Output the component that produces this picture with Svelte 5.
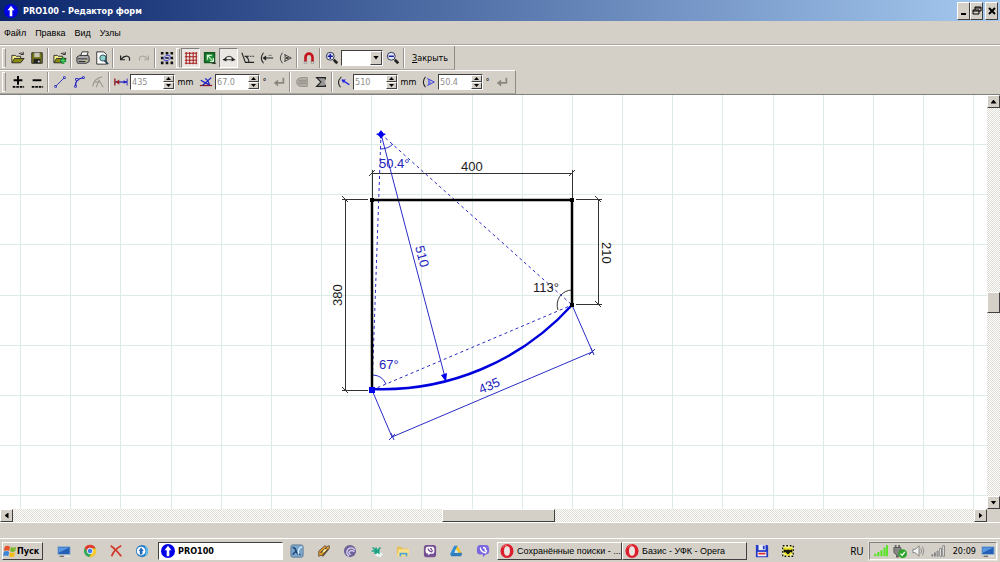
<script lang="ts">
  /**
   * Shape editor window
   *
   * Title bar, menus, two toolbars, the drawing canvas and the desktop taskbar.
   */

  type Tool = { icon?: string; label?: string; pressed?: boolean; sep?: boolean; grip?: boolean };

  const menus = ['Файл', 'Правка', 'Вид', 'Узлы'];

  const fileTools: Tool[] = [
    { icon: 'open', label: 'Открыть' },
    { icon: 'save', label: 'Сохранить' },
    { sep: true },
    { icon: 'import', label: 'Импорт' },
    { sep: true },
    { icon: 'print', label: 'Печать' },
    { icon: 'preview', label: 'Просмотр' },
    { sep: true },
    { icon: 'undo', label: 'Отменить' },
    { icon: 'redo', label: 'Повторить' },
    { sep: true },
    { icon: 'select', label: 'Выделить всё' },
    { grip: true },
    { icon: 'grid', label: 'Сетка', pressed: true },
    { icon: 'snap', label: 'Привязка' },
    { icon: 'dims', label: 'Размеры', pressed: true },
    { icon: 'angles', label: 'Углы' },
    { icon: 'radius', label: 'Радиусы' },
    { icon: 'arcAngle', label: 'Углы дуг' },
    { sep: true },
    { icon: 'magnet', label: 'Магнит' },
    { sep: true },
    { icon: 'zoomIn', label: 'Увеличить' }
  ];

  const nodeTools: Tool[] = [
    { icon: 'plus', label: 'Добавить узел' },
    { icon: 'minus', label: 'Удалить узел' },
    { sep: true },
    { icon: 'line', label: 'Отрезок' },
    { icon: 'curve', label: 'Дуга' },
    { icon: 'tangent', label: 'Касательная' },
    { sep: true }
  ];

  const quickLaunch = ['monitor', 'chrome', 'redX', 'teamUp'];
  const pinned = ['xapp', 'winamp', 'bittorrent', 'kasp', 'folder', 'viberBox', 'drive', 'viber'];
  const trayIcons = ['wifi', 'usb', 'sound', 'signal'];

  let values = $state({ length: '435', angle: '67.0', radius: '510', arc: '50.4' });

  const gridX = Array.from({ length: 40 }, (_, i) => Math.round(20 + i * 50.17));
  const gridY = Array.from({ length: 24 }, (_, i) => Math.round(49 + i * 50.17));

  const folder =
    '<path d="M1 13V5h4l1 1h5v2" fill="#f4f08a" stroke="#222"/><path d="M1 13.500l3-5h11l-4 5z" fill="#8a8a10" stroke="#222"/><path d="M9 3q3-2 5 1M14 1v3h-3" fill="none" stroke="#222"/>';
  const lens = '<circle cx="6" cy="6" r="4.500" fill="#dfe9ff" stroke="#223"/><path d="M10 10l4 4" stroke="#222" stroke-width="3"/>';
  const bolt = (gray: string) => `<path d="M13 3v6H5" fill="none" stroke="${gray}" stroke-width="2"/><path d="M2 9l5-4v8z" fill="${gray}"/>`;

  const icons: Record<string, string> = {
    app: '<circle cx="8" cy="8" r="8" fill="#0000e6"/><path d="M8 2l4 5H9.500v7h-3V7H4z" fill="#fff"/>',
    open: folder,
    save: '<path d="M2 2h12v12H2z" fill="#77771c" stroke="#222"/><path d="M5 2h6v5H5z" fill="#c8c8bb"/><path d="M4 9h8v5H4z" fill="#222"/><path d="M9 11h2v2H9z" fill="#ddd"/>',
    import: folder + '<path d="M8 11h7M11.500 7.500v7" stroke="#11862a" stroke-width="3"/><path d="M9 11h5M11.500 8.500v5" stroke="#5be070"/>',
    print:
      '<path d="M5 6l2-5h7l-2 5z" fill="#fff" stroke="#222"/><path d="M1 7l3-2h10l1 2v5l-3 2H2l-1-2z" fill="#aaa" stroke="#222"/><path d="M2 9h11M3 12h8" stroke="#222"/><path d="M10 11h2" stroke="#dd2"/>',
    preview:
      '<path d="M2 1h8l3 3v11H2z" fill="#fff" stroke="#222"/><circle cx="9" cy="8" r="3.500" fill="#8fd3ce" stroke="#245"/><path d="M11 11l4 4" stroke="#245" stroke-width="2"/>',
    undo: '<path d="M3 5v5h5M4 9q3-4 7-3 3 1 2 5" fill="none" stroke="#222" stroke-width="1.400"/>',
    redo: '<path d="M13 5v5H8M12 9Q9 5 5 6q-3 1-2 5" fill="none" stroke="#aaa69e" stroke-width="1.400"/>',
    select:
      '<path d="M1 2.500h14M1 13.500h14" stroke="#111" stroke-width="3" stroke-dasharray="3 2.500"/><path d="M1 8h3M12 8h3" stroke="#111" stroke-width="3"/><path d="M4 8l3-3h4l1 3-3 3H5z" fill="#ccd" stroke="#33c"/><path d="M6 8h4" stroke="#224" stroke-width="2"/>',
    grid: '<path d="M2.500 1v14M6.500 1v14M10.500 1v14M14 1v14M1 2.500h14M1 6.500h14M1 10.500h14M1 14h14" stroke="#a51c1c" stroke-width="1.200"/>',
    snap: '<path d="M2 2h11v11H2z" fill="#26913d" stroke="#145a20" stroke-width="2"/><path d="M5 10V5h5M5 5l6 6M8 12h4V8" fill="none" stroke="#d8f5d8" stroke-width="1.200"/><path d="M13 12v3M10 14h5" stroke="#222"/>',
    dims: '<path d="M1 10h14M3 10q1-4 5-4t5 4" fill="none" stroke="#222"/><path d="M5 7v5l-4-2zM11 7v5l4-2z" fill="#222"/>',
    angles: '<path d="M1 2l4 11h10M4 6h5M5 6q4 2 4 7" fill="none" stroke="#222" stroke-width="1.200"/><path d="M10 6h5" stroke="#222" stroke-dasharray="2 1"/>',
    radius: '<path d="M4 2Q-1 8 4 14M4 8h11" fill="none" stroke="#222" stroke-width="1.200"/><path d="M3 8l4-3v6z" fill="#222"/><path d="M10 5h4" stroke="#222" stroke-dasharray="1 1"/>',
    arcAngle: '<path d="M4 2Q-1 8 4 14M6 4l8 4-8 4M7 4v8" fill="none" stroke="#333"/><path d="M8 8h3" stroke="#333" stroke-width="2"/>',
    magnet: '<path d="M4 13V7a4 4 0 0 1 8 0v6" fill="none" stroke="#c4141c" stroke-width="3"/><path d="M2.500 12h3v2h-3zM10.500 12h3v2h-3z" fill="#f3f3f3" stroke="#555" stroke-width=".5"/>',
    zoomIn: lens + '<path d="M3 6h6M6 3v6" stroke="#1515a0" stroke-width="1.600"/>',
    zoomOut: lens + '<path d="M3 6h6" stroke="#1515a0" stroke-width="1.600"/>',
    plus: '<path d="M3 6h10M8 1v10" stroke="#000" stroke-width="2.200"/><path d="M2 13.500h13" stroke="#000" stroke-width="2" stroke-dasharray="3 1"/>',
    minus: '<path d="M3 6h10" stroke="#000" stroke-width="2.200"/><path d="M2 13.500h13" stroke="#000" stroke-width="2" stroke-dasharray="3 1"/>',
    line: '<path d="M3 13L13 3" stroke="#2222b8"/><path d="M2 12h2v2H2zM12 2h2v2h-2z" fill="#fff" stroke="#2222b8"/>',
    curve: '<path d="M4 13Q3 5 13 3" fill="none" stroke="#2222b8" stroke-width="1.400"/><path d="M3 12h2v2H3zM12 2h2v2h-2zM4 4h3v2H4z" fill="#fff" stroke="#2222b8"/>',
    tangent: '<path d="M2 13Q3 4 13 2M6 14l3-8 5 8M3 8h8" fill="none" stroke="#9b978f" stroke-width="1.200"/>',
    length: '<path d="M1 8h14" stroke="#2222c0" stroke-width="1.500"/><path d="M1 4v8" stroke="#901818" stroke-width="1.500"/><path d="M15 4v8" stroke="#2222c0"/><path d="M6 5v6L2 8z" fill="#a01818"/><path d="M11 6v4l4-2z" fill="#2222c0"/>',
    angle: '<path d="M1 12h14" stroke="#901818" stroke-width="1.500"/><path d="M4 12L14 3M2 6l9 5M7 4q4 2 5 8" fill="none" stroke="#2222c0" stroke-width="1.500"/>',
    enter: bolt('#8b8780'),
    hatch: '<path d="M14 3H8Q2 3 2 8t6 5h6z" fill="#b8b5ae" stroke="#8b8780"/><path d="M4 6h9M4 8h9M4 10h9" stroke="#8b8780"/>',
    sigma: '<path d="M13 5V3H3l5 5-5 5h10v-2" fill="#999" stroke="#222" stroke-width="1.300"/>',
    arcRadius: '<path d="M5 2Q-1 8 4 14" fill="none" stroke="#222" stroke-width="1.200"/><path d="M6 6l8 5" stroke="#2222e0" stroke-width="1.500"/><path d="M5 5h5l-3 4z" fill="#2222e0"/>',
    arcSpan: '<path d="M4 2Q-1 8 4 14" fill="none" stroke="#222" stroke-width="1.200"/><path d="M6 4l8 4-8 4M8 5v6" fill="none" stroke="#2222e0"/><path d="M7 6l4 2-4 2z" fill="#7777ee"/>',
    start:
      '<path d="M2 3q3-2 6 0L7 8Q4 6 1 8z" fill="#e8502a"/><path d="M9 3q3 2 6 0l-1 5q-3 2-6 0z" fill="#7ab82c"/><path d="M1 9q3-2 6 0l-1 5q-3-2-6 0z" fill="#3d86d8"/><path d="M8 9q3 2 6 0l-1 5q-3 2-6 0z" fill="#f3bd22"/>',
    monitor: '<path d="M1 3h14v9H1z" fill="#2360b5" stroke="#9db7d6"/><path d="M2 4h12L2 10z" fill="#5b97e0"/><path d="M3 14h5" stroke="#444"/><path d="M9 14h6" stroke="#f0f0f0"/>',
    chrome:
      '<circle cx="8" cy="8" r="7" fill="#35a853"/><path d="M2 4.400A7 7 0 0 1 14.500 5H8L5 9z" fill="#e23c2e"/><path d="M14.500 5A7 7 0 0 1 7 15l4-6-2-4z" fill="#fccb2f"/><circle cx="8" cy="8" r="3.200" fill="#3f7ee8" stroke="#fff"/>',
    redX: '<path d="M2 2q6 4 12 12M14 2Q6 6 3 14" fill="none" stroke="#d33a2c" stroke-width="2.200"/>',
    teamUp: '<circle cx="8" cy="8" r="7" fill="#2379c6"/><circle cx="7" cy="8" r="5" fill="#fff"/><path d="M7 4l3 4H8.500v4h-3V8H4z" fill="#2269ba"/><path d="M12 3q4 4 0 10" stroke="#61bfed" fill="none" stroke-width="2"/>',
    xapp: '<rect x="1" y="1" width="14" height="14" rx="2" fill="#7ba6cc" stroke="#5b7893"/><path d="M3 4q3 0 4 4t5 4M3 12l4-4" fill="none" stroke="#1d4372" stroke-width="1.600"/><path d="M14 3q-6 2-4 9" fill="none" stroke="#d4ebff" stroke-width="1.500"/>',
    winamp: '<path d="M2 8l7-6 2 1 3-1v3l-7 9-2-1-3 1z" fill="#eba02e" stroke="#584a38"/><path d="M4 10l7-6M6 13l7-7" stroke="#49453d" stroke-width="1.300"/><path d="M7 9l3-3" stroke="#fff2ac" stroke-width="2"/>',
    bittorrent: '<circle cx="8" cy="8" r="7" fill="#6f6299"/><path d="M14 7q-5-5-9 0-2 4 2 7M13 9q-3-3-6 0-1 2 2 3" fill="none" stroke="#d9d3f2" stroke-width="1.500"/>',
    kasp: '<path d="M8 8l7 3-3 4-6-2z" fill="#eaf6f3"/><path d="M3 4l8 7M12 4l-7 7M2 8h9M7 4v7" fill="none" stroke="#1aa383" stroke-width="1.800"/>',
    folder: '<path d="M1 3h5l1 2h7v9H1z" fill="#e6be56"/><path d="M3 6h12l-1 8H1z" fill="#f8e08a"/><path d="M4 14v-4h9v4h-2v-2H6v2z" fill="#4da6d9"/>',
    viberBox: '<rect x="1" y="1" width="14" height="14" rx="3" fill="#765092"/><path d="M5 3h6q2 0 2 3v2q0 3-2 3H8l-2 2v-2q-3 0-3-3V6q0-3 2-3z" fill="#fff"/><path d="M6 5q0 3 4 4l1-2M8 5q2 0 2 2" fill="none" stroke="#765092" stroke-width="1.400"/>',
    drive: '<path d="M6 2h4L5 14l-4-2z" fill="#2f8bd2"/><path d="M10 2l5 10-3 2-5-7z" fill="#f5c52b"/><path d="M2 13l3-3h10l-1 4H3z" fill="#317bb8"/><path d="M6 10l2-4 3 4z" fill="#d6eefe"/>',
    viber: '<path d="M5 1h6q4 0 4 5v2q0 4-4 4l-3 3v-3H5q-4 0-4-4V6q0-5 4-5z" fill="#7968df"/><path d="M5 4q0 5 6 6l1-2-2-1M8 4q3 0 3 3" fill="none" stroke="#fff" stroke-width="1.500"/>',
    opera: '<ellipse cx="8" cy="8" rx="7.500" ry="8" fill="#dc1f2d"/><ellipse cx="8" cy="8" rx="3.400" ry="5.500" fill="#ece6e2"/><path d="M3 4q2-3 5-3" stroke="#f98080" fill="none"/>',
    floppy: '<path d="M1 1h13l1 1v13H1z" fill="#2539c7"/><path d="M4 1h8v6H4z" fill="#e7ebf8"/><path d="M9 2h2v4H9z" fill="#2539c7"/><path d="M3 9h10v5H3z" fill="#f7eeee"/><path d="M4 11h8" stroke="#d63333" stroke-width="2"/>',
    bat: '<path d="M2 2h12v12H2z" fill="#f8f49e" stroke="#111" stroke-width="1.500" stroke-dasharray="2 2"/><path d="M3 4h3l2 1 2-1h3v6l-5 4-5-4z" fill="#e8e020"/><path d="M3 6l3 1 1-1 1 1 1-1 1 1 3-1v4l-2-1-3 3-3-3-2 1z" fill="#151510"/>',
    wifi: '<path d="M1.500 14v-3M5 14V9M8.500 14V7M12 14V4M15 14V1" stroke="#5de329" stroke-width="2.500"/>',
    usb: '<path d="M3 1v3M7 1v3" stroke="#666" stroke-width="2"/><path d="M1 4h8v5q-1 3-3 3v3H4v-3q-3-1-3-3z" fill="#858585" stroke="#555"/><circle cx="11" cy="11" r="5" fill="#2fa52c"/><path d="M8.500 11l2 2 3-4" stroke="#fff" stroke-width="1.500" fill="none"/>',
    sound: '<path d="M1 6h3l4-4v12l-4-4H1z" fill="#f4f4f4" stroke="#777"/><path d="M10 5q2 3 0 6M12 3q3 5 0 10" fill="none" stroke="#888"/>',
    signal: '<path d="M1 12h1v2H1zM4 10h1v4H4zM7 8h1v6H7zM10 5h2v9h-2zM13.500 2h2v12h-2z" fill="#fff" stroke="#777"/>'
  };
</script>

{#snippet icon(name: string)}
  <svg class="icon" viewBox="0 0 16 16" aria-hidden="true">{@html icons[name]}</svg>
{/snippet}

{#snippet tool(item: Tool)}
  {#if item.sep}
    <span class="sep"></span>
  {:else if item.grip}
    <span class="grip inner"></span>
  {:else}
    <button class="tool" class:pressed={item.pressed} aria-label={item.label}>
      {@render icon(item.icon ?? '')}
    </button>
  {/if}
{/snippet}

{#snippet arrow(dir: string)}
  <i class="arrow {dir}"></i>
{/snippet}

{#snippet spin(key: 'length' | 'angle' | 'radius' | 'arc', label: string)}
  <span class="spin">
    <input type="text" aria-label={label} bind:value={values[key]} />
    <span class="steps">
      <button aria-label="Больше">{@render arrow('up small')}</button>
      <button aria-label="Меньше">{@render arrow('down small')}</button>
    </span>
  </span>
{/snippet}

<div class="window">
  <header class="title-bar">
    {@render icon('app')}
    <span class="title">PRO100 - Редактор форм</span>
    <div class="window-buttons">
      <button aria-label="Свернуть"><svg viewBox="0 0 10 10"><path d="M2 8h5" stroke="#000" stroke-width="2" /></svg></button>
      <button aria-label="Восстановить">
        <svg viewBox="0 0 10 10"><path d="M3 4V1h6v4H7M3 2h6M1 4h6v4H1zM1 5h6" fill="none" stroke="#000" /></svg>
      </button>
      <button class="close" aria-label="Закрыть окно">
        <svg viewBox="0 0 10 10"><path d="M2 2l6 6M8 2L2 8" stroke="#000" stroke-width="2" /></svg>
      </button>
    </div>
  </header>

  <nav class="menu-bar">
    {#each menus as menu}
      <button>{menu}</button>
    {/each}
  </nav>

  <div class="toolbars">
    <div class="toolbar">
      <span class="grip"></span>
      {#each fileTools as item}
        {@render tool(item)}
      {/each}
      <span class="combo">
        <select aria-label="Масштаб"><option></option></select>
        <span class="combo-arrow">{@render arrow('down')}</span>
      </span>
      {@render tool({ icon: 'zoomOut', label: 'Уменьшить' })}
      <span class="sep"></span>
      <button class="text-button"><u>З</u>акрыть</button>
    </div>

    <div class="toolbar node-toolbar">
      <span class="grip"></span>
      {#each nodeTools as item}
        {@render tool(item)}
      {/each}
      {@render tool({ icon: 'length', label: 'Длина' })}
      {@render spin('length', 'Длина')}
      <span class="unit">mm</span>
      {@render tool({ icon: 'angle', label: 'Угол' })}
      {@render spin('angle', 'Угол')}
      <span class="degree">°</span>
      {@render tool({ icon: 'enter', label: 'Применить' })}
      <span class="sep"></span>
      {@render tool({ icon: 'hatch', label: 'Выпуклость' })}
      {@render tool({ icon: 'sigma', label: 'Сумма' })}
      <span class="sep"></span>
      {@render tool({ icon: 'arcRadius', label: 'Радиус' })}
      {@render spin('radius', 'Радиус')}
      <span class="unit">mm</span>
      {@render tool({ icon: 'arcSpan', label: 'Угол дуги' })}
      {@render spin('arc', 'Угол дуги')}
      <span class="degree">°</span>
      {@render tool({ icon: 'enter', label: 'Применить' })}
    </div>
  </div>

  <main class="workspace">
    <svg class="canvas">
      <g class="grid-lines">
        {#each gridX as x}
          <line x1={x} x2={x} y1="0" y2="100%" />
        {/each}
        {#each gridY as y}
          <line x1="0" x2="100%" y1={y} y2={y} />
        {/each}
      </g>

      <!-- dimensions of the straight sides -->
      <g class="dim">
        <path class="crisp" d="M372 105V75M572 105V75M372 78H572" />
        <path class="crisp" d="M368 104H342M368 295H342M345 104V295" />
        <path class="crisp" d="M576 104H602M576 209H602M598 104V209" />
        <path d="M369 81l6-6M569 81l6-6M342 101l6 6M342 292l6 6M595 101l6 6M595 206l6 6" />
        <path d="M572 195A15 15 0 0 0 558 215" />
      </g>

      <!-- dimensions of the selected arc -->
      <g class="dim blue">
        <path d="M372 295L392 342M572 210L593 258M392 342L592 257M389 345l6-6M391 338l3 7M589 260l6-6M591 253l3 7" />
        <path d="M381 39L446 286M373 280A15 15 0 0 1 386 289M380 54Q388 54 393 49" />
        <path class="dashed" d="M381 39L372 295M381 39L572 210M372 295L572 210" />
      </g>

      <path class="side" d="M372 294V105H572V210" />
      <path class="arc" d="M372 294A256 256 0 0 0 572 210" />
      <path class="node" d="M370 103h4v4h-4zM570 103h4v4h-4zM570 208h4v4h-4z" />
      <path class="node-blue" d="M369 292h6v6h-6zM381 35l2 3 3 1-3 2-2 3-2-3-3-2 3-1zM379 37h4v4h-4zM446 287l-5-7 6-2z" />

      <text x="461" y="76">400</text>
      <text x="533" y="197">113°</text>
      <text transform="translate(342 211) rotate(-90)">380</text>
      <text transform="translate(602 147) rotate(90)">210</text>
      <g class="blue-text">
        <text x="379" y="73">50.4°</text>
        <text x="379" y="274">67°</text>
        <text transform="translate(415 152) rotate(75)">510</text>
        <text transform="translate(481 299) rotate(-23)">435</text>
      </g>
    </svg>

    <div class="scroll vertical">
      <button class="scroll-button" aria-label="Вверх">{@render arrow('up')}</button>
      <span class="track"></span>
      <span class="thumb"></span>
      <span class="track"></span>
      <button class="scroll-button" aria-label="Вниз">{@render arrow('down')}</button>
    </div>

    <div class="scroll horizontal">
      <button class="scroll-button" aria-label="Влево">{@render arrow('left')}</button>
      <span class="track before"></span>
      <span class="thumb"></span>
      <span class="track after"></span>
      <button class="scroll-button" aria-label="Вправо">{@render arrow('right')}</button>
    </div>
  </main>

  <div class="status-bar"></div>

  <footer class="taskbar">
    <button class="start">{@render icon('start')}Пуск</button>
    <div class="launch">
      {#each quickLaunch as name}
        <button aria-label={name}>{@render icon(name)}</button>
      {/each}
    </div>
    <button class="task active">{@render icon('app')}PRO100</button>
    <div class="launch pinned">
      {#each pinned as name}
        <button aria-label={name}>{@render icon(name)}</button>
      {/each}
    </div>
    <button class="task">{@render icon('opera')}Сохранённые поиски - ...</button>
    <button class="task">{@render icon('opera')}Базис - УФК - Opera</button>
    <div class="launch extra">
      <button aria-label="Дискета">{@render icon('floppy')}</button>
      <button aria-label="Bat">{@render icon('bat')}</button>
    </div>
    <span class="language">RU</span>
    <div class="tray">
      {#each trayIcons as name}
        {@render icon(name)}
      {/each}
      <time>20:09</time>
      {@render icon('monitor')}
    </div>
  </footer>
</div>

<style>
  :global(body) {
    margin: 0;
  }

  .window {
    --face: #d4d0c8;
    --light: #fff;
    --shade: #808080;
    --dark: #404040;
    display: flex;
    flex-direction: column;
    height: 100vh;
    overflow: hidden;
    background: var(--face);
    color: #000;
    font-family: 'DejaVu Sans Condensed', 'DejaVu Sans', sans-serif;
    font-size: 9px;
    line-height: 12px;
  }

  button,
  input,
  select {
    margin: 0;
    padding: 0;
    border: 0;
    border-radius: 0;
    background: none;
    color: inherit;
    font: inherit;
  }

  .icon {
    display: block;
    flex: none;
    width: 14px;
    height: 14px;
  }

  .title-bar {
    display: flex;
    align-items: center;
    height: 21px;
    padding: 0 2px 0 4px;
    background: linear-gradient(to right, #0a246a, #a6caf0);
  }

  .title {
    flex: 1;
    padding-left: 5px;
    color: #fff;
    font-weight: bold;
  }

  .window-buttons {
    display: flex;
  }

  .window-buttons button {
    display: grid;
    place-items: center;
    width: 13px;
    height: 18px;
  }

  .window-buttons svg {
    width: 10px;
    height: 10px;
  }

  .window-buttons .close {
    margin-left: 2px;
  }

  .window-buttons button,
  .scroll-button,
  .thumb,
  .start,
  .task,
  .steps button,
  .combo-arrow {
    box-sizing: border-box;
    background: var(--face);
    border: 1px solid;
    border-color: var(--light) var(--dark) var(--dark) var(--light);
  }

  .menu-bar {
    display: flex;
    gap: 9px;
    height: 23px;
    padding-left: 4px;
    border-bottom: 1px solid #aaa69e;
    font-family: 'Liberation Sans', Arial, sans-serif;
  }

  .toolbars {
    display: flex;
    flex-direction: column;
    align-items: flex-start;
    border-top: 1px solid var(--light);
    border-bottom: 1px solid var(--shade);
  }

  .toolbar {
    display: flex;
    align-items: center;
    box-sizing: border-box;
    height: 24px;
    border-right: 1px solid #8f8b84;
    border-bottom: 1px solid #aaa69e;
  }

  .node-toolbar {
    padding-right: 4px;
    border-top: 1px solid var(--light);
  }

  .grip {
    box-sizing: border-box;
    width: 4px;
    height: 20px;
    margin: 0 2px;
    border: 1px solid;
    border-color: var(--light) #98948c var(--light) var(--light);
  }

  .grip.inner {
    margin: 0 1px 0 0;
  }

  .sep {
    box-sizing: border-box;
    width: 2px;
    height: 20px;
    margin: 0 1px;
    border-left: 1px solid #98948c;
    border-right: 1px solid var(--light);
  }

  .tool {
    display: grid;
    place-items: center;
    box-sizing: border-box;
    width: 19px;
    height: 20px;
  }

  .tool.pressed {
    border: 1px solid;
    border-color: var(--shade) var(--light) var(--light) var(--shade);
    background: #ebe8e3;
  }

  .combo,
  .spin {
    display: flex;
    box-sizing: border-box;
    height: 16px;
    border: 1px solid;
    border-color: var(--dark) var(--light) var(--light) var(--dark);
    background: #fff;
  }

  .combo {
    width: 42px;
  }

  .combo select {
    appearance: none;
    flex: 1;
    min-width: 0;
  }

  .combo-arrow {
    display: grid;
    place-items: center;
    width: 12px;
  }

  .spin {
    width: 45px;
  }

  .spin input {
    flex: 1;
    min-width: 0;
    padding-left: 1px;
    color: #8f8f8f;
  }

  .steps {
    display: flex;
    flex-direction: column;
    width: 11px;
  }

  .steps button {
    display: grid;
    place-items: center;
    flex: 1;
    min-height: 0;
  }

  .unit {
    width: 21px;
    text-align: center;
  }

  .degree {
    width: 9px;
    text-align: center;
  }

  .text-button {
    padding: 0 6px;
  }

  .arrow {
    display: block;
    width: 6px;
    height: 4px;
    background: #000;
    clip-path: polygon(50% 0, 100% 100%, 0 100%);
  }

  .arrow.down {
    clip-path: polygon(0 0, 100% 0, 50% 100%);
  }

  .arrow.small {
    width: 5px;
    height: 3px;
  }

  .arrow.left,
  .arrow.right {
    width: 4px;
    height: 6px;
    clip-path: polygon(0 50%, 100% 0, 100% 100%);
  }

  .arrow.right {
    clip-path: polygon(0 0, 100% 50%, 0 100%);
  }

  .workspace {
    display: grid;
    flex: 1;
    grid-template-columns: 1fr 13px;
    grid-template-rows: 1fr 13px;
    min-height: 0;
    border-bottom: 1px solid var(--light);
  }

  .canvas {
    width: 100%;
    height: 100%;
    background: #fff;
    font-family: 'Liberation Sans', Arial, sans-serif;
    font-size: 13px;
  }

  .canvas text {
    fill: #1c1c1c;
  }

  .grid-lines line {
    stroke: #dcebe6;
    shape-rendering: crispEdges;
  }

  .dim path {
    fill: none;
    stroke: #333;
  }

  .dim .crisp {
    shape-rendering: crispEdges;
  }

  .dim.blue path {
    stroke: #2b2bc4;
  }

  .dim .dashed {
    stroke-dasharray: 3 3;
  }

  .side,
  .arc {
    fill: none;
    stroke: #000;
    stroke-width: 2.5;
  }

  .arc {
    stroke: #0000dc;
  }

  .node-blue {
    fill: #0000f0;
  }

  .canvas .blue-text text {
    fill: #2424bc;
  }

  .scroll {
    display: flex;
  }

  .scroll.vertical {
    flex-direction: column;
  }

  .scroll-button {
    display: grid;
    place-items: center;
    flex: none;
    width: 13px;
    height: 13px;
  }

  .track {
    flex: 1;
    background: repeating-conic-gradient(#fff 0 25%, #dedbd5 0 50%) 0 0 / 2px 2px;
  }

  .track.before {
    flex-grow: 43;
  }

  .track.after {
    flex-grow: 42;
  }

  .thumb {
    flex: none;
  }

  .vertical .thumb {
    height: 21px;
  }

  .horizontal .thumb {
    width: 113px;
  }

  .status-bar {
    height: 15px;
  }

  .taskbar {
    display: flex;
    align-items: center;
    height: 23px;
    padding: 0 3px 0 2px;
    border-top: 1px solid var(--light);
  }

  .start,
  .task {
    display: flex;
    align-items: center;
    height: 18px;
  }

  .start {
    width: 41px;
    font-weight: bold;
  }

  .launch {
    display: flex;
  }

  .launch button {
    display: grid;
    flex: 1;
    place-items: center;
    min-width: 26px;
    height: 18px;
  }

  .start + .launch {
    padding: 0 3px 0 8px;
  }

  .launch.pinned {
    width: 212px;
    padding: 0 1px;
  }

  .launch.extra {
    padding-left: 2px;
  }

  .task {
    gap: 3px;
    width: 125px;
    padding: 0 2px;
    font-family: 'Liberation Sans', Arial, sans-serif;
    white-space: nowrap;
  }

  .task.active {
    background: #fff;
    border-color: var(--dark) var(--light) var(--light) var(--dark);
    font-family: inherit;
    font-weight: bold;
  }

  .language {
    margin-left: auto;
    padding-right: 5px;
    font-family: 'Noto Sans', sans-serif;
    font-size: 10px;
  }

  .tray {
    display: flex;
    align-items: center;
    gap: 5px;
    height: 16px;
    padding: 0 1px 0 4px;
    border: 1px solid;
    border-color: var(--shade) var(--light) var(--light) var(--shade);
    outline: 1px solid #e6e3de;
  }

  .tray time {
    padding-left: 3px;
  }
</style>
